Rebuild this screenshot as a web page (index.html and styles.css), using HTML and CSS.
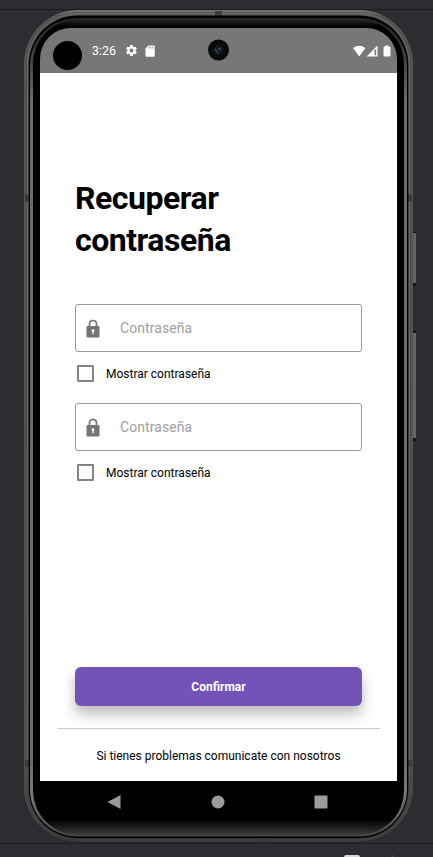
FILE: index.html
```html
<!DOCTYPE html>
<html lang="es">
<head>
<meta charset="utf-8">
<title>Recuperar contraseña</title>
<link rel="stylesheet" href="styles.css">
</head>
<body>
<svg class="device" viewBox="0 0 433 857" aria-hidden="true">
  <defs>
    <linearGradient id="rim" x1="0" y1="0" x2="0" y2="1">
      <stop offset="0" stop-color="#747474"/><stop offset=".008" stop-color="#555"/>
      <stop offset=".9" stop-color="#505050"/><stop offset=".97" stop-color="#444"/><stop offset="1" stop-color="#3b3b3b"/>
    </linearGradient>
    <linearGradient id="edge" x1="0" y1="0" x2="0" y2="1">
      <stop offset="0" stop-color="#6a6a6a"/><stop offset=".9" stop-color="#606060"/><stop offset="1" stop-color="#2c2c2c"/>
    </linearGradient>
    <linearGradient id="ring" x1="0" y1="0" x2="0" y2="1">
      <stop offset="0" stop-color="#242424"/><stop offset=".03" stop-color="#303030"/><stop offset=".1" stop-color="#6b6b6b"/>
      <stop offset=".9" stop-color="#6b6b6b"/><stop offset=".95" stop-color="#777"/><stop offset="1" stop-color="#444"/>
    </linearGradient>
    <linearGradient id="glass" x1="0" y1="0" x2="0" y2="1">
      <stop offset="0" stop-color="#242424"/><stop offset=".008" stop-color="#000"/>
      <stop offset=".982" stop-color="#000"/><stop offset="1" stop-color="#393939"/>
    </linearGradient>
  </defs>
  <path d="M0 9.5H433M0 843.5H433" stroke="#1b1c1e"/>
  <rect x="412" y="232" width="4" height="54" rx="1" fill="#131313"/>
  <rect x="413" y="233" width="3" height="50" fill="#646464"/>
  <rect x="412" y="331" width="4" height="110" rx="1" fill="#131313"/>
  <rect x="413" y="333" width="3" height="105" fill="#646464"/>
  <rect x="24" y="10" width="389" height="831.5" rx="54" fill="url(#rim)"/>
  <rect x="26.500" y="12.500" width="384" height="826.500" rx="51" fill="none" stroke="#444" stroke-width=".5"/>
  <rect x="27.500" y="13.500" width="382" height="824.500" rx="50" fill="none" stroke="url(#edge)"/>
  <path d="M25 198h4M25 763.500h4M408 198h4M408 763.500h4M218.500 11v5M262.500 838v3" stroke="#3b3b3b" stroke-width="7"/>
  <rect x="28.700" y="15.500" width="379.600" height="822.500" rx="49" fill="#000"/>
  <rect x="30" y="18" width="377" height="818.500" rx="47" fill="url(#ring)"/>
  <rect x="33" y="20" width="371" height="814.500" rx="44" fill="url(#glass)"/>
  <rect x="344" y="855" width="16" height="5" rx="2" fill="#d5d7da"/>
  <path d="M391.500 856h2" stroke="#666"/>
</svg>
<main class="screen">
  <header class="status">
    <span class="cutout"></span>
    <span class="time">3:26</span>
    <svg class="gear" viewBox="0 0 24 24"><path fill="#fff" fill-rule="evenodd" d="M19.400 13a7.500 7.500 0 0 0 0-2l2.100-1.600a.5.500 0 0 0 .1-.7l-2-3.400a.5.500 0 0 0-.6-.2l-2.500 1a7.300 7.300 0 0 0-1.700-1l-.4-2.600a.5.500 0 0 0-.5-.5h-4a.5.500 0 0 0-.5.500L9 5.100a7.700 7.700 0 0 0-1.700 1l-2.500-1a.5.500 0 0 0-.6.200l-2 3.400a.5.500 0 0 0 .1.700L4.500 11a8 8 0 0 0 0 2l-2.200 1.600a.5.500 0 0 0-.1.700l2 3.400c.1.200.4.300.6.200l2.500-1c.5.400 1.100.8 1.700 1l.4 2.600c0 .3.200.5.500.5h4c.3 0 .5-.2.500-.5l.4-2.600c.6-.3 1.200-.6 1.700-1l2.500 1c.2.100.5 0 .6-.2l2-3.400a.5.500 0 0 0-.1-.7zM12 15.600a3.600 3.600 0 1 1 0-7.200 3.600 3.600 0 0 1 0 7.200z"/></svg>
    <svg class="sdcard" viewBox="0 0 10 12"><path fill="#fff" d="M3.500.5H9q.7 0 .7.700V11q0 .7-.7.700H1.200Q.5 11.700.5 11V3.500z"/><path stroke="#777" stroke-width=".8" d="M4 1.500v2M5.900 1.500v2M7.800 1.500v2"/></svg>
    <svg class="signals" viewBox="0 0 38 12">
      <path fill="#fff" d="M0 3Q6-1.500 12.500 3L6.200 11.500zM24.500 0.500V11.500H13.500z"/>
      <path fill="#777" d="M21.500 4.500h1.700v5.700h-1.700z"/>
      <path fill="#fff" d="M32.500 .4h3v1h1q1 0 1 1V10.500q0 1-1 1h-5q-1 0-1-1V2.400q0-1 1-1h1z"/>
    </svg>
    <svg class="camera" viewBox="0 0 22 22"><circle cx="10.500" cy="11" r="10.500" fill="#0a0a0a"/><circle cx="10.500" cy="11" r="5" fill="#17181c"/><circle cx="10.500" cy="11" r="3.500" fill="#101a27"/><path d="M7.500 10q0 3 3 4" fill="none" stroke="#367386"/><circle cx="11.500" cy="10" r="1.200" fill="#59436f"/></svg>
  </header>
  <section class="content">
    <h1>Recuperar<br>contraseña</h1>
    <div class="group">
      <div class="field">
        <svg class="lock" viewBox="0 0 14 19"><path d="M3.500 8V5Q3.500 1.500 7 1.500T10.500 5V8" fill="none" stroke="#757575" stroke-width="1.700"/><rect x=".5" y="7" width="13" height="11.500" rx="1.300" fill="#757575"/><circle cx="7" cy="11.700" r="1.400" fill="#fff"/><path d="M7 12v3.200" stroke="#fff" stroke-width="1.300"/></svg>
        <span>Contraseña</span>
      </div>
      <label class="check"><i class="box"></i><span>Mostrar contraseña</span></label>
    </div>
    <div class="group">
      <div class="field">
        <svg class="lock" viewBox="0 0 14 19"><path d="M3.500 8V5Q3.500 1.500 7 1.500T10.500 5V8" fill="none" stroke="#757575" stroke-width="1.700"/><rect x=".5" y="7" width="13" height="11.500" rx="1.300" fill="#757575"/><circle cx="7" cy="11.700" r="1.400" fill="#fff"/><path d="M7 12v3.200" stroke="#fff" stroke-width="1.300"/></svg>
        <span>Contraseña</span>
      </div>
      <label class="check"><i class="box"></i><span>Mostrar contraseña</span></label>
    </div>
    <button class="confirm">Confirmar</button>
  </section>
  <footer class="help"><span>Si tienes problemas comunicate con nosotros</span></footer>
  <nav class="nav">
    <svg viewBox="0 0 14 16"><path fill="#9b9b9b" d="M13.500 1v14L.5 8z"/></svg>
    <svg viewBox="0 0 14 16"><circle cx="7" cy="8" r="6.500" fill="#9b9b9b"/></svg>
    <svg viewBox="0 0 14 16"><rect x=".5" y="1.500" width="13" height="13" rx=".8" fill="#9b9b9b"/></svg>
  </nav>
</main>
</body>
</html>
```
FILE: styles.css
```css
* { box-sizing: border-box; }
body {
  margin: 0;
  width: 433px;
  height: 857px;
  overflow: hidden;
  background: #2b2d30;
  font-family: Roboto, sans-serif;
  color: #000;
}
.device { position: absolute; inset: 0; width: 433px; height: 857px; }
.screen {
  position: relative;
  width: 357px;
  height: 795px;
  margin: 28px 0 0 40px;
  display: flex;
  flex-direction: column;
}
.status {
  position: relative;
  height: 45px;
  flex: none;
  display: flex;
  align-items: center;
  padding: 0 6px 0 13px;
  background: #777;
  border-radius: 31px 31px 0 0;
}
.cutout { width: 29px; height: 29px; margin-top: 10px; border-radius: 50%; background: #000; }
.time { margin-left: 10px; width: 24px; font-size: 12.500px; color: #fff; white-space: nowrap; }
.gear { width: 13px; height: 13px; margin-left: 9px; }
.sdcard { width: 10px; height: 12px; margin-left: 7px; }
.signals { width: 38px; height: 12px; margin-left: auto; }
.camera { position: absolute; left: 168px; top: 11px; width: 22px; height: 22px; }
.content {
  flex: 1;
  display: flex;
  flex-direction: column;
  padding: 105px 35px 22px;
  background: #fff;
}
h1 { margin: 0 0 43px; font-size: 32px; line-height: 41.500px; font-weight: 700; letter-spacing: -.48px; }
.group { height: 99px; }
.field {
  height: 48px;
  display: flex;
  align-items: center;
  gap: 20px;
  padding-left: 10px;
  border: 1px solid #999;
  border-radius: 3px;
  color: #a0a0a0;
  font-size: 14px;
  letter-spacing: .08px;
}
.lock { width: 14px; height: 19px; }
.check { display: flex; align-items: center; height: 17px; margin: 13px 0 0 2px; gap: 12px; font-size: 12px; }
.box { width: 17px; height: 17px; border: 2px solid #838383; border-radius: 1px; }
.confirm {
  height: 39px;
  margin-top: auto;
  border: 0;
  border-radius: 6px;
  background: #7453b9;
  color: #fff;
  font: 700 12px Roboto, sans-serif;
  box-shadow: 0 8px 14px rgba(0, 0, 0, .27);
}
.help { height: 53px; flex: none; padding: 0 17px; background: #fff; text-align: center; font-size: 12px; }
.help span { display: block; border-top: 1px solid #c8c8c8; padding-top: 19px; line-height: 17px; }
.nav { height: 42px; flex: none; display: flex; justify-content: space-between; align-items: center; padding: 0 69px 0 67px; }
.nav svg { width: 14px; height: 16px; }
```
